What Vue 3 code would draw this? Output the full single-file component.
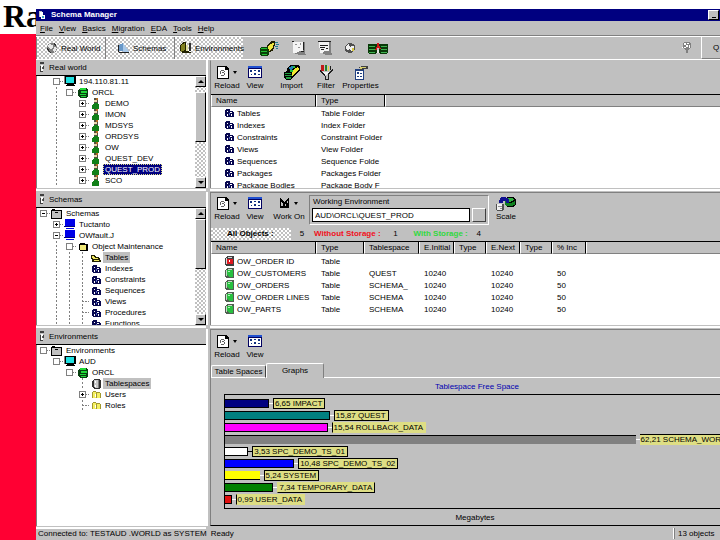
<script setup>
import { ref } from 'vue'

const menus = ['File', 'View', 'Basics', 'Migration', 'EDA', 'Tools', 'Help']

const modes = [
  { icon: 'globe', label: 'Real World' },
  { icon: 'cone', label: 'Schemas' },
  { icon: 'env', label: 'Environments' },
]

// Each guide character is one indentation cell:
// "|" line, "L" elbow, "+" closed, "-" open, "o" plain box.
const realWorld = [
  { guides: ' o', icon: 'host', label: '194.110.81.11' },
  { guides: ' |o', icon: 'db', label: 'ORCL' },
  ...['DEMO', 'IMON', 'MDSYS', 'ORDSYS', 'OW', 'QUEST_DEV', 'QUEST_PROD', 'SCO'].map((label) => ({
    guides: ' | +',
    icon: 'user',
    label,
    state: label === 'QUEST_PROD' ? 'active' : '',
  })),
]

const schemas = [
  { guides: '-', icon: 'root', label: 'Schemas' },
  { guides: ' +', icon: 'screen', label: 'Tuctanto' },
  { guides: ' -', icon: 'screen', label: 'OWfault.J' },
  { guides: ' |o', icon: 'folder', label: 'Object Maintenance' },
  { guides: ' |||', icon: 'open', label: 'Tables', state: 'dim' },
  { guides: ' |||', icon: 'objs', label: 'Indexes' },
  { guides: ' |||', icon: 'objs', label: 'Constraints' },
  { guides: ' |||', icon: 'objs', label: 'Sequences' },
  { guides: ' ||L', icon: 'objs', label: 'Views' },
  { guides: ' ||L', icon: 'objs', label: 'Procedures' },
  { guides: ' |||', icon: 'objs', label: 'Functions' },
]

const environments = [
  { guides: 'o', icon: 'root', label: 'Environments' },
  { guides: ' o', icon: 'host', label: 'AUD' },
  { guides: '  o', icon: 'db', label: 'ORCL' },
  { guides: '   |', icon: 'disk', label: 'Tablespaces', state: 'dim' },
  { guides: '   +', icon: 'folders', label: 'Users' },
  { guides: '   L', icon: 'folders', label: 'Roles' },
]

const trees = [
  { id: 'real', title: 'Real world', rows: realWorld, scroll: true },
  { id: 'schemas', title: 'Schemas', rows: schemas, scroll: true },
  { id: 'envs', title: 'Environments', rows: environments, scroll: false },
]

const folders = [
  ['Tables', 'Table Folder'],
  ['Indexes', 'Index Folder'],
  ['Constraints', 'Constraint Folder'],
  ['Views', 'View Folder'],
  ['Sequences', 'Sequence Folde'],
  ['Packages', 'Packages Folder'],
  ['Package Bodies', 'Package Body F'],
]

const tables = [
  { name: 'OW_ORDER ID', icon: 'tbl-red', space: '', initial: '', next: '', pct: '' },
  { name: 'OW_CUSTOMERS', icon: 'tbl-green', space: 'QUEST', initial: '10240', next: '10240', pct: '50' },
  { name: 'OW_ORDERS', icon: 'tbl-green', space: 'SCHEMA_', initial: '10240', next: '10240', pct: '50' },
  { name: 'OW_ORDER LINES', icon: 'tbl-green', space: 'SCHEMA', initial: '10240', next: '10240', pct: '50' },
  { name: 'OW_PARTS', icon: 'tbl-green', space: 'SCHEMA', initial: '10240', next: '10240', pct: '50' },
]

const axisMax = 75
const bars = [
  { value: 6.65, text: '6,65 IMPACT', tone: 'navy', edge: 'full' },
  { value: 15.87, text: '15,87 QUEST', tone: 'teal', edge: 'full' },
  { value: 15.54, text: '15,54 ROLLBACK_DATA', tone: 'magenta', edge: 'left' },
  { value: 62.21, text: '62,21 SCHEMA_WOR', tone: 'grey', edge: 'top' },
  { value: 3.53, text: '3,53 SPC_DEMO_TS_01', tone: 'white', edge: 'full' },
  { value: 10.48, text: '10,48 SPC_DEMO_TS_02', tone: 'blue', edge: 'full' },
  { value: 5.24, text: '5,24 SYSTEM', tone: 'yellow', edge: 'full' },
  { value: 7.34, text: '7,34 TEMPORARY_DATA', tone: 'green', edge: 'right' },
  { value: 0.99, text: '0,99 USER_DATA', tone: 'red', edge: 'left' },
]

const environment = ref('AUD\\ORCL\\QUEST_PROD')
const tab = ref('Graphs')
</script>

<template>
  <svg class="sprite" aria-hidden="true">
    <symbol id="i-app" viewBox="0 0 10 10"><path fill="#c0c0c0" d="M1 1h3v6h-3z" /><path fill="#fff" d="M2 2h3v3h2v4h-4v-2h-1z" /><path fill="#40a0c0" d="M4 6h2v2h-2z" /></symbol>
    <symbol id="i-globe" viewBox="0 0 12 12"><circle cx="6" cy="6" r="5" fill="#808080" /><path fill="#e8e8e8" d="M3 2l4 1v2l-2 2l-3-2zM8 5l3 1l-2 4l-2-1z" /><path fill="#303030" d="M1 6l2 2l2 3l-3-2zM8 1l2 2v1l-2-1z" /></symbol>
    <symbol id="i-cone" viewBox="0 0 12 12"><path fill="#6898c8" d="M1 3l4-2v8h-4z" /><path fill="#a8c8e8" d="M5 1l5 7l1 2h-6z" /><path fill="#202020" d="M0 3h1v7h10v1h-10l-1-1z" /></symbol>
    <symbol id="i-env" viewBox="0 0 12 12"><path fill="#202000" d="M0 3l4-3h2v9l5 1v1h-9l-2-2z" /><path fill="#808020" d="M1 3l4-2v7l-4 2z" /><path fill="#e0e0a0" d="M6 3h2v6h-2z" /><path fill="#303030" d="M9 1h2v8h-2z" /></symbol>
    <symbol id="i-transfer" viewBox="0 0 20 15"><path fill="#084008" d="M0 7l2-1h6l1 2v5l-2 2h-6l-1-2z" /><path fill="#20c030" d="M1 7h6v1h-6zM1 10h6v1h-6zM2 13h5v1h-5z" /><path fill="#202000" d="M7 4l5-4h3v4l-2 6l-4 1z" /><path fill="#f0e840" d="M8 5l5-3l1 1l-2 5l-3 2z" /><path fill="#208090" d="M15 1h3v1h-3zM16 3h3v1h-3zM15 5h3v1h-3zM16 7h2v1h-2z" /></symbol>
    <symbol id="i-sheet" viewBox="0 0 14 15"><path fill="#808080" d="M1 1h12v10l1 3h-6l-7-2z" /><path fill="#f4f4f4" d="M1 1h10v9h-3l-4 2h-3z" /><path fill="#909090" d="M3 3h2v1h-2zM6 6h2v1h-2zM8 2h1v2h-1z" /><path fill="#202020" d="M0 0h2v1h-2zM11 1h1v8h-1zM9 10h3v1h-3z" /></symbol>
    <symbol id="i-sheet2" viewBox="0 0 14 15"><path fill="#808080" d="M1 1h12v9l1 4h-6l-6-3z" /><path fill="#f4f4f4" d="M1 1h10v9h-4l-3 2h-2z" /><path fill="#202020" d="M0 0h13v1h-13zM2 4h8v1h-8zM2 6h5v1h-5zM3 8h3v1h-3zM8 7h2v1h-2z" /></symbol>
    <symbol id="i-disc" viewBox="0 0 13 12"><path fill="#505050" d="M1 4l3-3h5l3 2v5l-3 3h-4l-4-2z" /><path fill="#f0f0f0" d="M2 4l3-2l2 3l3-2l1 4l-3 2l-2-2l-3 2z" /><path fill="#d8c840" d="M9 6h2v3h-2z" /></symbol>
    <symbol id="i-dbs" viewBox="0 0 20 12"><path fill="#083808" d="M0 2l1-1h7l1 1v8l-1 1h-7l-1-1zM11 2l1-1h7l1 1v8l-1 1h-7l-1-1z" /><path fill="#40b050" d="M1 3h6v1h-6zM1 6h6v1h-6zM1 9h6v1h-6zM13 3h6v1h-6zM13 6h6v1h-6zM13 9h6v1h-6z" /><path fill="#d01818" d="M9 0h2v3l2 3l-1 1l-2-2l-2 3l-1-1l2-3z" /><path fill="#e8e8e8" d="M9 7h2v3h-2z" /></symbol>
    <symbol id="i-bulb" viewBox="0 0 10 12"><path fill="#808080" d="M2 0h6l1 2v4l-3 2v3h-2v-3l-3-2v-4z" /><path fill="#fff" d="M2 1h2v2h-2zM5 1h2v1h-2zM4 3h2v2h-2zM7 3h1v3h-1zM2 5h2v1h-2zM0 5h1v1h-1z" /></symbol>
    <symbol id="i-page" viewBox="0 0 12 13"><path fill="#000" d="M0 0h9l3 3v10h-12z" /><path fill="#fff" d="M1 1h7v3h3v8h-10z" /><path fill="#000" d="M8 1l3 3h-3z" /><path fill="#606060" d="M4 4h3v1h-3zM3 5h1v3h-1zM7 5h1v1h-1zM5 6h2v1h-2zM7 7h1v2h-1zM4 9h3v1h-3z" /></symbol>
    <symbol id="i-view" viewBox="0 0 14 12"><path fill="#000060" d="M0 0h14v12h-14z" /><path fill="#2050d0" d="M0 0h14v2h-14z" /><path fill="#fff" d="M1 3h12v8h-12z" /><path fill="#103080" d="M2 4h2v2h-2zM6 4h2v1h-2zM10 4h2v2h-2zM3 8h1v1h-1zM6 7h2v2h-2zM10 8h2v1h-2z" /></symbol>
    <symbol id="i-import" viewBox="0 0 16 15"><path fill="#000" d="M3 3l4-3h7l2 2v3l-4 5l-4 3l-1 2h-5l-2-2v-6l3-1z" /><path fill="#20a040" d="M1 8h6v1h-6zM1 10h7v1h-7zM2 12h5v2h-5z" /><path fill="#2080b0" d="M5 2l4-1v3l-3 2z" /><path fill="#20c040" d="M9 1h2v2h-2zM6 5h3v2h-3z" /><path fill="#f0e830" d="M11 3l3-1l1 2l-4 5l-3 2v-3z" /></symbol>
    <symbol id="i-filter" viewBox="0 0 13 15"><path fill="#c01818" d="M1 0h3v6h-3z" /><path fill="#208030" d="M5 0h2v6h-2z" /><path fill="#e0d840" d="M8 1h1v5h-1z" /><path fill="#202020" d="M0 4l5 5v2h1v3h2v-5l5-5v2l-4 4v5h-4v-4l-5-5zM10 1h1v4h-1z" /><path fill="#f4f4f4" d="M3 7h7l-3 3h-1z" /></symbol>
    <symbol id="i-props" viewBox="0 0 14 14"><path fill="#204080" d="M1 3h9v11h-9z" /><path fill="#fff" d="M2 5h7v8h-7z" /><path fill="#204080" d="M3 6h2v2h-2zM6 7h2v1h-2zM3 10h2v1h-2zM6 10h2v1h-2z" /><path fill="#404040" d="M5 2l3-2h6v3h-4l-3 2z" /><path fill="#d8d070" d="M6 2l3-1h3v1h-3l-3 2z" /></symbol>
    <symbol id="i-workon" viewBox="0 0 11 11"><path fill="#000" d="M0 0l5 4l5-4v11h-10z" /><path fill="#c0c0c0" d="M1 4l2 2v3h-2zM8 3h1v2h-1zM5 7h2v2h-2z" /></symbol>
    <symbol id="i-scale" viewBox="0 0 21 16"><path fill="#000" d="M9 4l3-3h6l3 2v6l-3 3h-6l-3-3z" /><path fill="#108020" d="M9 5l3 2h5l3-2v4l-3 2h-5l-3-2z" /><path fill="#30b040" d="M13 2h4l2 2l-3 2h-3l-2-2z" /><path fill="#101090" d="M3 5l2-4h5l4 3v3h-4v-2h-3v2h-4z" /><path fill="#505050" d="M0 9l2-1h5l1 1v6l-1 1h-6l-1-1z" /><path fill="#f0f0f0" d="M1 9h5v6h-5z" /><path fill="#909090" d="M2 11h4v1h-4zM4 13h2v1h-2z" /></symbol>
    <symbol id="i-pin" viewBox="0 0 6 11"><path fill="#404040" d="M1 0h4v2h-4zM1 4h1v6h-1zM4 4h1v3h-1zM2 9h2v1h-2z" /><path fill="#fff" d="M2 3h2v6h-2z" /><path fill="#606060" d="M3 5h1v2h-1z" /></symbol>
    <symbol id="i-host" viewBox="0 0 12 11"><path fill="#000" d="M1 0h11v8h-2v1h1v1h-9v-1h1v-1h-2z" /><path fill="#808080" d="M0 0h1v8h-1z" /><path fill="#20e0e0" d="M2 1h8v6h-8z" /></symbol>
    <symbol id="i-screen" viewBox="0 0 12 11"><path fill="#0000e8" d="M1 0h10v7h-10zM2 9h8v1h-8z" /><path fill="#000080" d="M0 7h11v1h-11z" /></symbol>
    <symbol id="i-db" viewBox="0 0 10 10"><path fill="#084010" d="M0 2h1v6h-1zM2 0h6l2 1v8l-2 1h-6l-1-1v-8z" /><path fill="#20d838" d="M2 0h6v2h-6zM3 3h6v2h-6zM2 6h6v1h-6zM3 8h5v1h-5z" /></symbol>
    <symbol id="i-user" viewBox="0 0 8 11"><path fill="#505040" d="M2 0h3l1 1v4l-2 1l-2-1z" /><path fill="#e8d8b0" d="M2 2h3v2h-3z" /><path fill="#b06820" d="M4 0h2v2h-2z" /><path fill="#108018" d="M0 7l2-2h4l1 2v4h-7z" /></symbol>
    <symbol id="i-root" viewBox="0 0 12 10"><path fill="#000" d="M1 0h3v1h7v9h-11v-9z" /><path fill="#c0c0c0" d="M1 2h9v7h-9z" /><path fill="#000" d="M4 3h3v1h-3z" /></symbol>
    <symbol id="i-folder" viewBox="0 0 9 8"><path fill="#000" d="M1 0h4l1 1h3v6l-1 1h-7l-1-1v-6z" /><path fill="#f0e878" d="M1 2h6v5h-6z" /></symbol>
    <symbol id="i-open" viewBox="0 0 10 8"><path fill="#202000" d="M0 1h3l2 2h3l2 4l-1 1h-8z" /><path fill="#f0e860" d="M1 2h2l1 2h3v1h-5zM3 6h5v1h-5z" /></symbol>
    <symbol id="i-folders" viewBox="0 0 9 9"><path fill="#a09830" d="M0 2h1v-1h3v1h4v1h1v5h-9z" /><path fill="#f4f060" d="M1 2h3v6h-3zM5 3h3v5h-3z" /><path fill="#fff" d="M3 4h1v3h-1z" /></symbol>
    <symbol id="i-objs" viewBox="0 0 9 8"><path fill="#080850" d="M1 0h4v2h3l1 2v4h-8l-1-2v-4z" /><path fill="#fff" d="M2 2h1v1h-1zM5 3h2v1h-2zM2 5h1v2h-1zM6 5h1v2h-1z" /><path fill="#5060c0" d="M4 4h1v2h-1z" /></symbol>
    <symbol id="i-disk" viewBox="0 0 9 10"><path fill="#303030" d="M2 0h5l2 1v8l-2 1h-5l-2-2v-6z" /><path fill="#c8c8c8" d="M2 1h4v8h-3l-1-2z" /><path fill="#fff" d="M3 2h1v2h-1zM3 6h1v2h-1z" /><path fill="#808080" d="M6 1h1v8h-1z" /></symbol>
    <symbol id="i-tbl-red" viewBox="0 0 9 10"><path fill="#404040" d="M2 0h6l1 1v8l-1 1h-6l-2-1v-7z" /><path fill="#d8d8d8" d="M1 2h1v6h-1zM3 1h4v1h-4z" /><path fill="#e01820" d="M2 3h6v5h-6z" /><path fill="#fff" d="M4 4h1v2h-1z" /></symbol>
    <symbol id="i-tbl-green" viewBox="0 0 9 10"><path fill="#506050" d="M2 0h6l1 1v8l-1 1h-6l-2-1v-7z" /><path fill="#c8d8c8" d="M1 2h1v6h-1zM3 1h4v1h-4z" /><path fill="#28c040" d="M2 2h6v7h-4l-2-2z" /><path fill="#b0f0b8" d="M3 3h2v1h-2z" /></symbol>
  </svg>

  <div class="page">
    <aside class="brand">
      <p class="brand-name">Ra</p>
    </aside>

    <main class="window">
      <header class="titlebar">
        <svg class="app-icon"><use href="#i-app" /></svg>
        <h1>Schema Manager</h1>
        <button class="min" aria-label="Minimize"></button>
      </header>

      <nav class="menubar">
        <button v-for="m in menus" :key="m"><u>{{ m[0] }}</u>{{ m.slice(1) }}</button>
      </nav>

      <div class="toolbar">
        <button v-for="m in modes" :key="m.icon" class="mode dither" :class="m.icon">
          <svg><use :href="'#i-' + m.icon" /></svg>{{ m.label }}
        </button>
        <div class="actions">
          <button aria-label="Transfer"><svg class="w20"><use href="#i-transfer" /></svg></button>
          <button aria-label="Script"><svg class="w14"><use href="#i-sheet" /></svg></button>
          <button aria-label="Report"><svg class="w14"><use href="#i-sheet2" /></svg></button>
          <button aria-label="Disc"><svg class="w12"><use href="#i-disc" /></svg></button>
          <button aria-label="Compare"><svg class="w20"><use href="#i-dbs" /></svg></button>
        </div>
        <button class="hint" aria-label="Hint"><svg class="w10"><use href="#i-bulb" /></svg></button>
        <button class="quit">Q</button>
      </div>

      <div class="panes">
        <section v-for="t in trees" :key="t.id" class="tree-pane" :class="t.id">
          <h2><svg><use href="#i-pin" /></svg>{{ t.title }}</h2>
          <div class="tree-body">
            <ul class="tree">
              <li v-for="r in t.rows" :key="r.label">
                <span v-for="(g, i) in r.guides" :key="i" class="cell" :class="{ line: g === '|', elbow: g === 'L', node: '+-o'.includes(g) }">
                  <i v-if="'+-o'.includes(g)" class="box" :class="{ minus: g === '-', plus: g === '+' }"></i>
                </span>
                <span class="ico"><svg :class="'s-' + r.icon"><use :href="'#i-' + r.icon" /></svg></span>
                <span class="label" :class="r.state">{{ r.label }}</span>
              </li>
            </ul>
            <div v-if="t.scroll" class="scroll dither">
              <button class="up" aria-label="Scroll up"></button>
              <div class="thumb"></div>
              <button class="down" aria-label="Scroll down"></button>
            </div>
          </div>
        </section>

        <section class="view-pane v1">
          <div class="tools">
            <button class="tool"><span class="pic"><svg class="page-i"><use href="#i-page" /></svg><i class="caret"></i></span>Reload</button>
            <button class="tool"><span class="pic"><svg class="view-i"><use href="#i-view" /></svg></span>View</button>
            <button class="tool wide"><span class="pic"><svg class="w16"><use href="#i-import" /></svg></span>Import</button>
            <button class="tool slim"><span class="pic"><svg class="w14"><use href="#i-filter" /></svg></span>Filter</button>
            <button class="tool wide"><span class="pic"><svg class="w14"><use href="#i-props" /></svg></span>Properties</button>
          </div>
          <div class="list">
            <table>
              <colgroup><col class="c-name" /><col class="c-kind" /><col /></colgroup>
              <thead><tr><th>Name</th><th>Type</th><th></th></tr></thead>
              <tbody>
                <tr v-for="f in folders" :key="f[0]">
                  <td class="name"><svg class="s-objs"><use href="#i-objs" /></svg>{{ f[0] }}</td><td>{{ f[1] }}</td><td></td>
                </tr>
              </tbody>
            </table>
          </div>
        </section>

        <section class="view-pane v2">
          <div class="tools">
            <button class="tool"><span class="pic"><svg class="page-i"><use href="#i-page" /></svg><i class="caret"></i></span>Reload</button>
            <button class="tool"><span class="pic"><svg class="view-i"><use href="#i-view" /></svg></span>View</button>
            <button class="tool mid"><span class="pic"><svg class="w10"><use href="#i-workon" /></svg><i class="caret"></i></span>Work On</button>
            <div class="group">
              <label for="env">Working Environment</label>
              <div class="combo">
                <select id="env" v-model="environment"><option>AUD\ORCL\QUEST_PROD</option></select>
                <span class="drop"></span>
              </div>
            </div>
            <button class="tool"><span class="pic"><svg class="w20"><use href="#i-scale" /></svg></span>Scale</button>
          </div>
          <div class="counts">
            <span class="all dither">All Objects :</span><span class="num">5</span>
            <span class="without">Without Storage :</span><span class="num">1</span>
            <span class="with">With Storage :</span><span class="num">4</span>
          </div>
          <div class="list second">
            <table>
              <colgroup>
                <col class="c-name" /><col class="c-type" /><col class="c-space" /><col class="c-init" />
                <col class="c-small" /><col class="c-next" /><col class="c-small" /><col class="c-pct" /><col />
              </colgroup>
              <thead>
                <tr><th>Name</th><th>Type</th><th>Tablespace</th><th>E.Initial</th><th>Type</th><th>E.Next</th><th>Type</th><th>% Inc</th><th></th></tr>
              </thead>
              <tbody>
                <tr v-for="t in tables" :key="t.name">
                  <td class="name"><svg class="s-tbl"><use :href="'#i-' + t.icon" /></svg>{{ t.name }}</td>
                  <td>Table</td><td>{{ t.space }}</td><td>{{ t.initial }}</td><td></td><td>{{ t.next }}</td><td></td><td>{{ t.pct }}</td><td></td>
                </tr>
              </tbody>
            </table>
          </div>
        </section>

        <section class="view-pane v3">
          <div class="tools">
            <button class="tool"><span class="pic"><svg class="page-i"><use href="#i-page" /></svg><i class="caret"></i></span>Reload</button>
            <button class="tool"><span class="pic"><svg class="view-i"><use href="#i-view" /></svg></span>View</button>
          </div>
          <div class="tabs" role="tablist">
            <button v-for="n in ['Table Spaces', 'Graphs']" :key="n" role="tab" :aria-selected="tab === n" :class="{ on: tab === n }" @click="tab = n">{{ n }}</button>
            <span class="rule"></span>
          </div>
          <figure class="chart">
            <figcaption>Tablespace Free Space</figcaption>
            <div class="plot">
              <div v-for="b in bars" :key="b.text" class="bar-row">
                <span class="bar" :class="b.tone" :style="{ width: (b.value / axisMax) * 100 + '%' }"></span>
                <span class="tie" :class="b.tone"></span>
                <span class="tag" :class="b.edge">{{ b.text }}</span>
              </div>
            </div>
            <p class="axis">Megabytes</p>
          </figure>
        </section>
      </div>

      <footer class="status">
        <span>Connected to: TESTAUD .WORLD as SYSTEM</span><span class="ready">Ready</span>
        <span class="total">13 objects</span>
      </footer>
    </main>
  </div>
</template>

<style>
body {
  margin: 0;
  background: #fff;
}
</style>

<style scoped>
* {
  box-sizing: border-box;
}
.sprite {
  display: none;
}
svg {
  display: block;
  flex: none;
  width: 12px;
  height: 12px;
  shape-rendering: crispEdges;
}
h1, h2, p, ul, figure {
  margin: 0;
  padding: 0;
}
button, select {
  margin: 0;
  padding: 0;
  border: 0;
  border-radius: 0;
  background: none;
  color: #000;
  font: inherit;
}
.page {
  display: grid;
  grid-template-columns: 36px minmax(0, 1fr);
  height: 100vh;
  overflow: hidden;
  color: #000;
  font: 8px/11px "Liberation Sans", Arial, sans-serif;
  white-space: nowrap;
}
.brand {
  background: #ff0033;
  overflow: hidden;
}
.brand-name {
  height: 34px;
  padding-left: 3px;
  background: #fff;
  font: bold 32px/33px "Liberation Serif", serif;
}
.window {
  display: flex;
  flex-direction: column;
  min-height: 0;
  margin-top: 9px;
  background: #c0c0c0;
}
.dither {
  background: repeating-conic-gradient(#c0c0c0 0 25%, #fff 0 50%) 0 0 / 4px 4px;
}

.titlebar {
  display: flex;
  align-items: center;
  height: 12px;
  padding-left: 2px;
  background: #000080;
  color: #fff;
}
.app-icon {
  width: 10px;
  height: 10px;
}
h1 {
  flex: 1;
  padding-left: 3px;
  font: bold 8px/12px "Liberation Sans", sans-serif;
}
.min {
  width: 11px;
  height: 10px;
  margin-right: 1px;
  border: 1px solid;
  border-color: #fff #000 #000 #fff;
  background: linear-gradient(#000, #000) 3px 6px / 4px 1px no-repeat #c0c0c0;
}
.menubar {
  display: flex;
  gap: 6px;
  height: 15px;
  padding: 1px 4px 0;
  border-bottom: 1px solid #808080;
}
.toolbar {
  display: flex;
  align-items: stretch;
  height: 24px;
  border-top: 1px solid #fff;
  border-bottom: 1px solid #fff;
}
.mode {
  display: flex;
  align-items: center;
  gap: 3px;
  width: 69px;
  padding-left: 9px;
  border-left: 1px solid #808080;
}
.mode.cone {
  padding-left: 12px;
}
.mode.env {
  padding-left: 5px;
}
.actions {
  display: flex;
  flex: 1;
  align-items: center;
  gap: 12px;
  padding-left: 17px;
}
.w20 { width: 20px; height: 15px; }
.w16 { width: 16px; height: 15px; }
.w14 { width: 14px; height: 15px; }
.w12 { width: 12px; height: 12px; }
.w10 { width: 10px; height: 12px; }
.hint {
  padding-right: 9px;
}
.quit {
  width: 19px;
  padding-left: 10px;
  border-left: 1px solid #fff;
  border-bottom: 1px solid #808080;
}

.panes {
  display: grid;
  flex: 1;
  grid-template-columns: minmax(0, 1fr) minmax(0, 3fr);
  grid-template-rows: minmax(0, 128fr) minmax(0, 133fr) minmax(0, 197fr);
  gap: 4px;
  min-height: 0;
  background: #c0c0c0;
}
.tree-pane {
  display: flex;
  flex-direction: column;
  grid-column: 1;
  min-height: 0;
  box-shadow: 0 1px #c0c0c0, 0 2px #fff, 0 3px #fff, 2px 0 #fff;
}
.real, .v1 { grid-row: 1; }
.schemas, .v2 { grid-row: 2; }
.envs, .v3 { grid-row: 3; }
h2 {
  display: flex;
  align-items: center;
  gap: 4px;
  height: 16px;
  padding-left: 3px;
  border-bottom: 1px solid #000;
  font: inherit;
}
h2 svg {
  width: 6px;
  height: 11px;
}
.tree-body {
  display: flex;
  flex: 1;
  min-height: 0;
  background: #fff;
  border-left: 1px solid #808080;
}
.tree {
  flex: 1;
  min-width: 0;
  overflow: hidden;
  list-style: none;
}
.tree li {
  display: flex;
  align-items: center;
  height: 11px;
}
.cell {
  display: flex;
  flex: none;
  align-items: center;
  justify-content: center;
  width: 13px;
  height: 11px;
}
.line, .elbow {
  background: repeating-linear-gradient(#808080 0 2px, #fff 2px 4px) 6px 0 / 1px 11px no-repeat;
}
.elbow {
  background:
    repeating-linear-gradient(#808080 0 2px, #fff 2px 4px) 6px 0 / 1px 11px no-repeat,
    repeating-linear-gradient(90deg, #808080 0 2px, #fff 2px 3px) 6px 5px / 7px 1px no-repeat;
}
.node {
  background: repeating-linear-gradient(90deg, #808080 0 2px, #fff 2px 3px) 9px 5px / 4px 1px no-repeat;
}
.box {
  width: 7px;
  height: 7px;
  border: 1px solid #808080;
  background: #fff;
}
.minus {
  background: linear-gradient(#000, #000) 1px 2px / 3px 1px no-repeat #fff;
}
.plus {
  background:
    linear-gradient(#000, #000) 1px 2px / 3px 1px no-repeat,
    linear-gradient(#000, #000) 2px 1px / 1px 3px no-repeat #fff;
}
.ico {
  display: flex;
  flex: none;
  justify-content: center;
  width: 14px;
}
.ico svg { height: 11px; }
.ico .s-user { width: 8px; }
.ico .s-db { width: 10px; height: 10px; }
.ico .s-open { width: 10px; height: 8px; }
.ico .s-root { height: 10px; }
.ico .s-folders { width: 9px; height: 9px; }
.ico .s-folder, .s-objs, .ico .s-objs { width: 9px; height: 8px; }
.ico .s-disk, .s-tbl { width: 9px; height: 10px; }
.label {
  padding: 0 2px;
}
.active {
  outline: 1px dotted #e0e080;
  outline-offset: -1px;
  background: #000080;
  color: #fff;
}
.dim {
  background: #c0c0c0;
}
.scroll {
  display: flex;
  flex-direction: column;
  width: 11px;
}
.up, .down {
  display: flex;
  align-items: center;
  justify-content: center;
  height: 11px;
  border: 1px solid;
  border-color: #fff #000 #000 #fff;
  background: #c0c0c0;
}
.up::before, .down::before, .caret {
  width: 0;
  height: 0;
  border: 0 solid transparent;
  content: '';
}
.up::before {
  border-width: 0 3px 3px;
  border-bottom-color: #000;
}
.down::before {
  border-width: 3px 3px 0;
  border-top-color: #000;
}
.caret {
  border-width: 3px 2px 0;
  border-top-color: #000;
}
.thumb {
  height: 50px;
  border: 1px solid;
  border-color: #fff #000 #000 #fff;
  background: #c0c0c0;
}
.real .thumb {
  margin-top: 5px;
}
.down {
  margin-top: auto;
}

.view-pane {
  display: flex;
  flex-direction: column;
  grid-column: 2;
  min-height: 0;
  border-top: 1px solid #808080;
  border-left: 1px solid #808080;
  box-shadow: 0 1px #c0c0c0, 0 2px #fff, 0 3px #fff;
}
.v1 {
  border-top-color: #c0c0c0;
}
.tools {
  display: flex;
  height: 33px;
  padding: 3px 2px 0;
}
.tool {
  display: flex;
  flex-direction: column;
  align-items: center;
  width: 28px;
  height: 28px;
  line-height: 12px;
}
.tool.wide { width: 45px; }
.tool.slim { width: 24px; }
.tool.mid { width: 40px; }
.pic {
  display: flex;
  align-items: center;
  justify-content: center;
  gap: 4px;
  height: 16px;
}
.page-i { width: 12px; height: 13px; }
.view-i { width: 14px; height: 12px; }
.list {
  flex: 1;
  min-height: 0;
  overflow: hidden;
  border-top: 1px solid #000;
  background: #fff;
}
table {
  width: 100%;
  border-collapse: separate;
  border-spacing: 0;
  table-layout: fixed;
}
.c-name { width: 105px; }
.c-kind { width: 69px; }
.c-type { width: 48px; }
.c-space { width: 55px; }
.c-init { width: 35px; }
.c-small { width: 32px; }
.c-next { width: 34px; }
.c-pct { width: 34px; }
th, td {
  height: 12px;
  padding: 0 0 0 4px;
  font-weight: normal;
  line-height: 11px;
  text-align: left;
}
th {
  border-right: 1px solid #000;
  border-left: 1px solid #fff;
  border-bottom: 1px solid #808080;
  background: #c0c0c0;
}
th:last-child {
  border-right: 0;
}
td {
  padding-left: 5px;
}
td.name {
  padding-left: 14px;
}
.name svg {
  display: inline-block;
  margin-right: 3px;
  vertical-align: middle;
}

.v2 .tools {
  height: 34px;
  padding-top: 2px;
}
.group {
  width: 180px;
  height: 30px;
  margin-right: 3px;
  padding: 1px 2px 1px;
  border: 1px solid;
  border-color: #808080 #fff #fff #808080;
}
.group label {
  display: block;
  height: 11px;
  padding-left: 1px;
  line-height: 10px;
}
.combo {
  display: flex;
  gap: 2px;
}
select {
  flex: 1;
  height: 14px;
  padding-left: 2px;
  border: 1px solid #000;
  background: #fff;
  appearance: none;
}
.drop {
  width: 14px;
  height: 14px;
  border: 1px solid;
  border-color: #fff #404040 #404040 #fff;
}
.counts {
  display: flex;
  align-items: center;
  height: 14px;
  font: bold 8px/12px "Liberation Sans", sans-serif;
}
.all {
  width: 80px;
  padding-left: 16px;
}
.num {
  width: 22px;
  text-align: center;
  font-weight: normal;
}
.without { color: #f01020; padding-right: 4px; }
.with { color: #30d840; padding-left: 6px; }
.num + span { margin-left: 1px; }
.second tbody::before {
  display: block;
  height: 1px;
  content: '';
}

.v3 {
  border-bottom: 1px solid #000;
  box-shadow: none;
}
.tabs {
  display: flex;
  align-items: flex-end;
  height: 15px;
}
.tabs button {
  width: 55px;
  height: 13px;
  border: 1px solid #fff;
  border-right-color: #404040;
  border-radius: 2px 2px 0 0;
}
.tabs .on {
  width: 58px;
  height: 15px;
  padding-bottom: 2px;
  border-right-color: #808080;
  border-bottom: 0;
}
.rule {
  flex: 1;
  border-bottom: 1px solid #fff;
}
.chart {
  display: flex;
  flex: 1;
  flex-direction: column;
  min-height: 0;
  padding: 3px 0 0 13px;
  overflow: hidden;
}
figcaption {
  height: 13px;
  padding-left: 10px;
  color: #0000b0;
  text-align: center;
}
.plot {
  padding: 2px 0 3px;
  border: 1px solid #000;
  border-right: 0;
}
.bar-row {
  display: flex;
  align-items: center;
  height: 12px;
}
.bar {
  flex: none;
  height: 9px;
  border: 1px solid #000;
  border-left: 0;
}
.tie {
  flex: none;
  width: 4px;
  height: 1px;
  background: #fff;
}
.tie.white { background: #000; }
.bar.navy { background: #000080; }
.bar.teal { background: #008080; }
.bar.magenta { background: #ff00ff; }
.bar.grey { background: #808080; border-width: 1px 0 0; }
.bar.white { background: #fff; }
.bar.blue { background: #0000ff; }
.bar.yellow { background: #ffff00; border-width: 0 0 1px; }
.bar.green { background: #008000; }
.bar.red { background: #e01010; }
.tag {
  flex: none;
  height: 11px;
  padding: 0 2px 0 1px;
  border: 1px solid #000;
  background: #dede84;
  line-height: 10px;
}
.tag.left { border-color: #dede84 #dede84 #dede84 #000; }
.tag.top { border-color: #000 #dede84 #dede84; border-width: 1px 0; }
.tag.right { border-color: #dede84 #000 #000 #dede84; }
.axis {
  padding: 3px 0 0 6px;
  text-align: center;
}
.status {
  display: flex;
  align-items: center;
  height: 14px;
  padding-left: 2px;
}
.ready {
  padding-left: 4px;
}
.total {
  width: 46px;
  margin-left: auto;
  padding-left: 3px;
  border-left: 1px solid #808080;
  box-shadow: -1px 0 #fff;
}
</style>
